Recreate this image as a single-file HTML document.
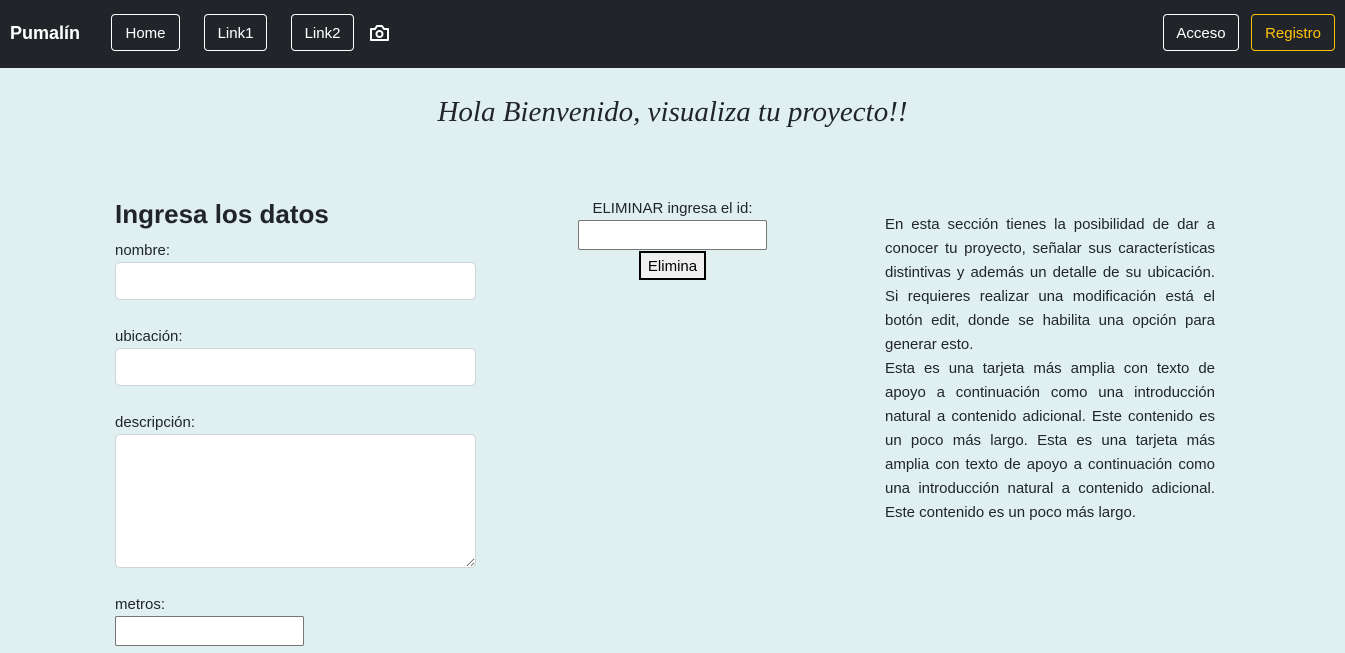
<!DOCTYPE html>
<html style="overflow:hidden;height:653px"><head><meta charset="utf-8"><style>
body{margin:0;width:1345px;height:653px;overflow:hidden;background:#e0f0f0;font-family:"Liberation Sans",sans-serif;color:#212529;position:relative}
nav{position:absolute;left:0;top:0;width:1345px;height:68px;background:#212529}
.a{position:absolute;color:#fff;font-size:15px}
.b{position:absolute;top:14px;height:37px;box-sizing:border-box;border:1px solid #fff;border-radius:4px;color:#fff;font-size:15px;line-height:37px;text-align:center}
.abs{position:absolute}
input,textarea{position:absolute;background:#fff;box-sizing:border-box;margin:0}
.fc{border:1px solid #ced4da;border-radius:5px}
.lbl{position:absolute;font-size:15px}
</style></head><body>
<nav>
<div class="a" style="left:10px;top:23px;font-weight:bold;font-size:18px">Pumalín</div>
<div class="b" style="left:111px;width:69px">Home</div>
<div class="b" style="left:204px;width:63px">Link1</div>
<div class="b" style="left:291px;width:63px">Link2</div>
<svg class="abs" style="left:369px;top:24px" width="21" height="18" viewBox="0 0 21 18"><path d="M2 5h4l2-3h5l2 3h4v11H2z" fill="none" stroke="#fff" stroke-width="2" stroke-linejoin="round"/><circle cx="10.5" cy="10" r="3" fill="none" stroke="#fff" stroke-width="2"/></svg>
<div class="b" style="left:1163px;width:76px">Acceso</div>
<div class="b" style="left:1251px;width:84px;border-color:#ffc107;color:#ffc107">Registro</div>
</nav>
<div class="abs" style="left:0;width:1345px;top:96px;text-align:center;font-family:'Liberation Serif',serif;font-style:italic;font-size:29px">Hola Bienvenido, visualiza tu proyecto!!</div>
<div class="abs" style="left:115px;top:199px;font-size:26px;font-weight:bold">Ingresa los datos</div>
<div class="lbl" style="left:115px;top:242px">nombre:</div>
<input class="fc" style="left:115px;top:262px;width:361px;height:38px">
<div class="lbl" style="left:115px;top:328px">ubicación:</div>
<input class="fc" style="left:115px;top:348px;width:361px;height:38px">
<div class="lbl" style="left:115px;top:414px">descripción:</div>
<textarea class="fc" style="left:115px;top:434px;width:361px;height:134px"></textarea>
<div class="lbl" style="left:115px;top:596px">metros:</div>
<input style="left:115px;top:616px;width:189px;height:30px;border:1px solid #767676;border-radius:2px">
<div class="lbl" style="left:578px;width:189px;top:200px;text-align:center">ELIMINAR ingresa el id:</div>
<input style="left:578px;top:220px;width:189px;height:30px;border:1px solid #767676;border-radius:2px">
<div class="abs" style="left:639px;top:251px;width:67px;height:29px;box-sizing:border-box;border:2px solid #000;background:#efefef;font-size:15px;text-align:center;line-height:27px;color:#000">Elimina</div>
<div class="abs" style="left:885px;top:213px;width:330px;font-size:15px;line-height:24px;text-align:justify">En esta sección tienes la posibilidad de dar a conocer tu proyecto, señalar sus características distintivas y además un detalle de su ubicación. Si requieres realizar una modificación está el botón edit, donde se habilita una opción para generar esto.<br>Esta es una tarjeta más amplia con texto de apoyo a continuación como una introducción natural a contenido adicional. Este contenido es un poco más largo. Esta es una tarjeta más amplia con texto de apoyo a continuación como una introducción natural a contenido adicional. Este contenido es un poco más largo.</div>
</body></html>
